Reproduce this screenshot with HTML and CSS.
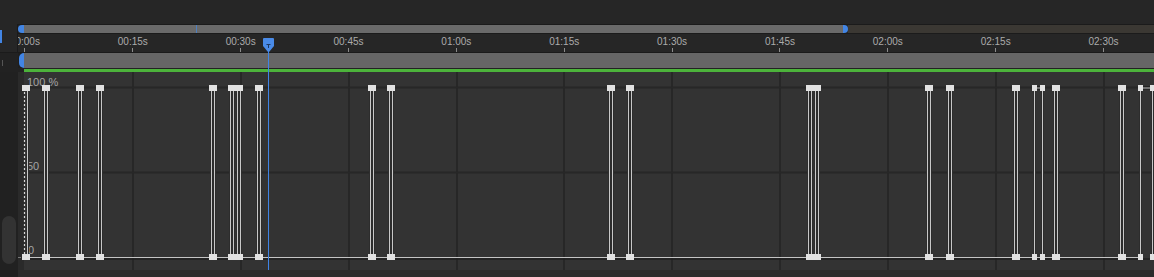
FILE: index.html
```html
<!DOCTYPE html>
<html lang="en">
<head>
    <meta charset="UTF-8">
    <meta name="viewport" content="width=device-width, initial-scale=1.0">
    <title>Graph Editor</title>
    <link rel="stylesheet" href="styles.css">
</head>
<body>

    <div class="timeline">
        <div class="top-space"></div>

        <!-- Navigator scroll bar -->
        <div class="side side-nav"><span class="nav-mark"></span></div>
        <div class="scroll-track">
            <span class="cap cap-left"></span>
            <span class="thumb-body"><i class="thumb-tick"></i></span>
            <span class="cap cap-right"></span>
            <span class="scroll-rest"></span>
        </div>

        <!-- Time ruler -->
        <div class="ruler">
            <div class="ruler-inner">
                <span class="mark major">00:00s</span>
                <span class="mark">00:15s</span>
                <span class="mark">00:30s</span>
                <span class="mark">00:45s</span>
                <span class="mark major">01:00s</span>
                <span class="mark">01:15s</span>
                <span class="mark">01:30s</span>
                <span class="mark">01:45s</span>
                <span class="mark major">02:00s</span>
                <span class="mark">02:15s</span>
                <span class="mark">02:30s</span>
            </div>
        </div>

        <!-- Work area -->
        <div class="side side-work"><span class="work-mark"></span></div>
        <div class="work-area">
            <span class="cap cap-left"></span>
            <span class="work-bar"></span>
        </div>

        <div class="side"></div>
        <div class="range-row"><span class="range-line"></span></div>

        <!-- Value graph -->
        <div class="side side-graph"><span class="v-scroll"></span></div>
        <div class="graph">
            <svg width="1136" height="198" viewBox="18 72 1136 198">
                <defs>
                    <g id="pulses">
                        <path d="M24.5 88H27.5V257.5"/>
                        <path d="M44.5 257.5V88H47.5V257.5"/>
                        <path d="M78.5 257.5V88H81.5V257.5"/>
                        <path d="M98.5 257.5V88H101.5V257.5"/>
                        <path d="M211.5 257.5V88H214.5V257.5"/>
                        <path d="M230.5 257.5V88H233.5V257.5"/>
                        <path d="M237.5 257.5V88H240.5V257.5"/>
                        <path d="M257.5 257.5V88H260.5V257.5"/>
                        <path d="M370.5 257.5V88H373.5V257.5"/>
                        <path d="M389.5 257.5V88H392.5V257.5"/>
                        <path d="M609.5 257.5V88H612.5V257.5"/>
                        <path d="M628.5 257.5V88H631.5V257.5"/>
                        <path d="M808.5 257.5V88H811.5V257.5"/>
                        <path d="M815.5 257.5V88H818.5V257.5"/>
                        <path d="M927.5 257.5V88H930.5V257.5"/>
                        <path d="M948.5 257.5V88H951.5V257.5"/>
                        <path d="M1014.5 257.5V88H1017.5V257.5"/>
                        <path d="M1034.5 257.5V88H1042.5V257.5"/>
                        <path d="M1054.5 257.5V88H1057.5V257.5"/>
                        <path d="M1120.5 257.5V88H1123.5V257.5"/>
                        <path d="M1140.5 257.5V88H1152.5V257.5"/>
                    </g>
                    <path id="keys" d="M22 85h5v6h-5z M25 85h5v6h-5z M42 85h5v6h-5z M45 85h5v6h-5z M76 85h5v6h-5z M79 85h5v6h-5z M96 85h5v6h-5z M99 85h5v6h-5z M209 85h5v6h-5z M212 85h5v6h-5z M228 85h5v6h-5z M231 85h5v6h-5z M235 85h5v6h-5z M238 85h5v6h-5z M255 85h5v6h-5z M258 85h5v6h-5z M368 85h5v6h-5z M371 85h5v6h-5z M387 85h5v6h-5z M390 85h5v6h-5z M607 85h5v6h-5z M610 85h5v6h-5z M626 85h5v6h-5z M629 85h5v6h-5z M806 85h5v6h-5z M809 85h5v6h-5z M813 85h5v6h-5z M816 85h5v6h-5z M925 85h5v6h-5z M928 85h5v6h-5z M946 85h5v6h-5z M949 85h5v6h-5z M1012 85h5v6h-5z M1015 85h5v6h-5z M1032 85h5v6h-5z M1040 85h5v6h-5z M1052 85h5v6h-5z M1055 85h5v6h-5z M1118 85h5v6h-5z M1121 85h5v6h-5z M1138 85h5v6h-5z M1150 85h5v6h-5z"/>
                </defs>

                <rect x="18" y="72" width="6" height="198" fill="#2a2a2a"/>
                <rect x="24" y="72" width="1130" height="198" fill="#333333"/>

                <!-- grid -->
                <path class="grid" d="M133 72V270M241 72V270M349 72V270M457 72V270M564 72V270M672 72V270M780 72V270M888 72V270M996 72V270M1104 72V270"/>
                <path class="grid" d="M24 87.5H1154M24 172.5H1154"/>

                <text class="axis-label" x="27" y="86">100 %</text>
                <text class="axis-label" x="27" y="170">50</text>
                <text class="axis-label" x="28" y="254">0</text>

                <!-- baseline -->
                <path d="M24 259H1154" stroke="#1f1f1f" stroke-width="1.5"/>
                <path d="M24 257.5H1140M1152 257.5H1154" stroke="#c4c4c4" stroke-width="1"/>
                <path d="M18 257.5H21" stroke="#7a7a7a" stroke-width="1"/>
                <path d="M24.5 88V257" stroke="#d6d6d6" stroke-width="1.2" stroke-dasharray="2 2"/>

                <!-- keyframes -->
                <use href="#pulses" fill="none" stroke="#1b1b1b" stroke-width="3"/>
                <use href="#pulses" fill="none" stroke="#c8c8c8" stroke-width="1.2"/>
                <use href="#keys" fill="#e2e2e2"/>
                <use href="#keys" y="169" fill="#e2e2e2"/>
            </svg>
        </div>

        <div class="side side-foot"></div>
        <div class="foot"></div>

        <!-- Current time indicator -->
        <div class="playhead">
            <svg width="11" height="14" viewBox="0 0 11 14">
                <path d="M1 0H10Q11 0 11 1V8L6 14H5L0 8V1Q0 0 1 0Z" fill="#4a8be8"/>
                <path d="M3.5 6.5H7.5M5.5 6.5V10" stroke="#1d3a66" stroke-width="1"/>
            </svg>
            <span class="playhead-line"></span>
        </div>
    </div>

</body>
</html>
```

FILE: styles.css
```css
body {
    margin: 0;
    background-color: #262626;
    font-family: 'Liberation Sans', Arial, sans-serif;
    overflow: hidden;
}
.timeline {
    position: relative;
    display: grid;
    grid-template-columns: 18px 1fr;
    grid-template-rows: 24px 10px 18px 17px 3px 198px 7px;
    width: 1154px;
    height: 277px;
}
.top-space {
    grid-column: 1 / 3;
    background-color: #262626;
}
.side {
    background-color: #222222;
}
.side-nav {
    grid-row: 2 / 4;
    background-color: #262626;
    border-right: 1px solid #1b1b1b;
    padding-top: 6px;
}
.nav-mark {
    display: block;
    width: 2px;
    height: 13px;
    background-color: #4285e4;
}
.scroll-track {
    display: flex;
    border-top: 1px solid #1b1b1b;
    border-bottom: 1px solid #1b1b1b;
}
.cap {
    background-color: #4285e4;
}
.cap-left {
    width: 6px;
    border-radius: 5px 0 0 5px;
}
.cap-right {
    width: 5px;
    border-radius: 0 5px 5px 0;
}
.thumb-body {
    width: 819px;
    display: flex;
    background-color: #6a6a6a;
}
.thumb-tick {
    margin-left: 172px;
    width: 1px;
    background-color: #4d7fc0;
}
.scroll-rest {
    flex: 1;
    background-color: #3b3833;
}
.ruler {
    overflow: hidden;
    background-color: #262626;
}
.ruler-inner {
    display: flex;
    height: 100%;
    margin-left: -47px;
}
.mark {
    flex: none;
    width: 107.86px;
    display: flex;
    flex-direction: column;
    align-items: center;
    box-sizing: border-box;
    padding-top: 2px;
    font-size: 10px;
    line-height: 12px;
    color: #ababab;
}
.mark::after {
    content: '';
    margin-top: auto;
    width: 1px;
    height: 4px;
    background-color: #8c8c8c;
}
.mark.major::after {
    height: 8px;
}
.side-work {
    border-top: 1px solid #1b1b1b;
    padding: 7px 0 0 2px;
}
.work-mark {
    display: block;
    width: 1px;
    height: 6px;
    background-color: #555555;
}
.work-area {
    display: flex;
    border-top: 1px solid #1b1b1b;
    border-bottom: 1px solid #222222;
    background-color: #1e1e1e;
}
.work-area .cap-left {
    margin-left: 1px;
    width: 5px;
}
.work-bar {
    flex: 1;
    background-color: #666666;
}
.range-row {
    display: flex;
    background-color: #222222;
}
.range-line {
    flex: 1;
    margin-left: 6px;
    background-color: #4cb33b;
}
.side-graph {
    display: flex;
    align-items: flex-end;
    padding: 0 2px 6px 2px;
    background-color: #212121;
}
.v-scroll {
    width: 14px;
    height: 48px;
    border-radius: 7px;
    background-color: #333333;
}
.graph svg {
    display: block;
}
.grid {
    fill: none;
    stroke: #272727;
    stroke-width: 2;
}
.axis-label {
    font-family: 'Liberation Sans', Arial, sans-serif;
    font-size: 11px;
    fill: #a3a3a3;
}
.side-foot {
    background-color: #1f1f1f;
}
.foot {
    background-color: #2a2a2a;
}
.playhead {
    position: absolute;
    left: 263px;
    top: 38px;
    bottom: 7px;
    width: 11px;
    display: flex;
    flex-direction: column;
    align-items: center;
}
.playhead svg {
    display: block;
    flex: none;
}
.playhead-line {
    flex: 1;
    width: 1px;
    background-color: #3f84e6;
}
```
